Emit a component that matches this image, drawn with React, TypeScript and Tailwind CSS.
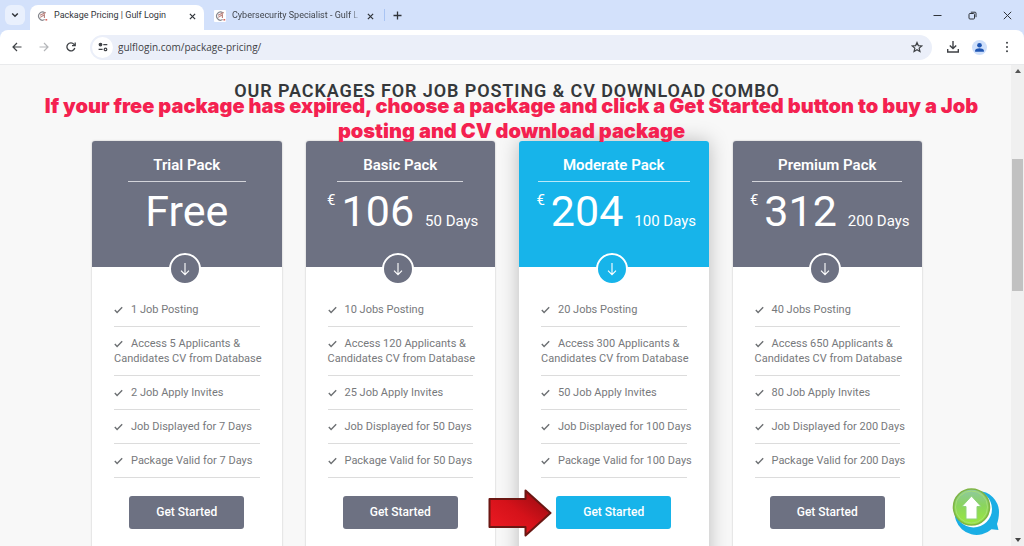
import { ReactNode } from "react";

type Pack = {
  name: string;
  price: string;
  days?: string;
  duration: number;
  jobs: string;
  applicants: number;
  invites: number;
  rule: string;
  featured?: boolean;
};

const packs: Pack[] = [
  { name: "Trial Pack", price: "Free", duration: 7, jobs: "1 Job Posting", applicants: 5, invites: 2, rule: "w-[118px]" },
  { name: "Basic Pack", price: "106", days: "50 Days", duration: 50, jobs: "10 Jobs Posting", applicants: 120, invites: 25, rule: "w-[126px]" },
  { name: "Moderate Pack", price: "204", days: "100 Days", duration: 100, jobs: "20 Jobs Posting", applicants: 300, invites: 50, rule: "w-[152px]", featured: true },
  { name: "Premium Pack", price: "312", days: "200 Days", duration: 200, jobs: "40 Jobs Posting", applicants: 650, invites: 80, rule: "w-[150px]" },
];

function Favicon() {
  return (
    <svg viewBox="0 0 12 12" className="size-3 shrink-0" fill="none" aria-hidden="true">
      <rect width="12" height="12" rx="1" fill="#fff" />
      <path d="M8.8 2.8A4 4 0 1 0 8.6 9.6" stroke="#85878d" strokeWidth="1.2" />
      <path d="M4 5.2 9.8 2.6M4.2 7.4 8.4 4.8V8" stroke="#b9807b" strokeWidth="1.1" />
      <path d="M9.4 9.8h1.8" stroke="#d5554d" strokeWidth="1.4" />
    </svg>
  );
}

function Cross() {
  return (
    <svg viewBox="0 0 8 8" className="size-[7px]" aria-hidden="true">
      <path d="m1 1 6 6M7 1 1 7" stroke="#30343a" strokeWidth="1.4" />
    </svg>
  );
}

function ToolButton({ label, children }: { label: string; children: ReactNode }) {
  return (
    <button aria-label={label} className="flex size-[27px] shrink-0 items-center justify-center">
      {children}
    </button>
  );
}

function TabStrip() {
  return (
    <div className="flex h-[30px] shrink-0 items-end bg-[#d3e1fb]">
      <button aria-label="Search tabs" className="mb-[5px] ml-[5px] flex size-5 items-center justify-center rounded-md bg-[#e9f0fd]">
        <svg viewBox="0 0 8 8" className="size-2" fill="none" aria-hidden="true">
          <path d="m1.2 2.5 2.8 2.8 2.8-2.8" stroke="#30343a" strokeWidth="1.5" />
        </svg>
      </button>
      <div className="ml-[5px] flex h-[25px] w-[174px] items-center rounded-t-lg bg-white pr-2 pb-[3px] pl-[6px]">
        <Favicon />
        <span className="ml-[6px] grow whitespace-nowrap font-[Roboto,sans-serif] text-[9px] text-[#33363b]">Package Pricing | Gulf Login</span>
        <button aria-label="Close tab"><Cross /></button>
      </div>
      <div className="flex h-[25px] w-[174px] items-center pr-1 pb-[3px] pl-[10px]">
        <Favicon />
        <span className="ml-[6px] w-[128px] overflow-hidden whitespace-nowrap font-[Roboto,sans-serif] text-[9px] text-[#42464d] [mask-image:linear-gradient(to_right,#000_92%,transparent)]">
          Cybersecurity Specialist - Gulf L
        </span>
        <button aria-label="Close tab" className="ml-auto"><Cross /></button>
      </div>
      <div className="mb-[9px] ml-[6px] h-3 w-px bg-[#a9c4f3]" />
      <button aria-label="New tab" className="mb-[10px] ml-2">
        <svg viewBox="0 0 9 9" className="size-[9px]" aria-hidden="true">
          <path d="M4.5.5v8M.5 4.5h8" stroke="#30343a" strokeWidth="1.3" />
        </svg>
      </button>
      <div className="mb-[10px] ml-auto flex items-center gap-[26px] pr-3">
        <button aria-label="Minimize">
          <svg viewBox="0 0 9 9" className="size-[9px]" aria-hidden="true"><path d="M.5 4.5h8" stroke="#30343a" /></svg>
        </button>
        <button aria-label="Restore">
          <svg viewBox="0 0 9 9" className="size-[9px]" fill="none" stroke="#30343a" aria-hidden="true">
            <rect x="1" y="2.5" width="5.5" height="5.5" rx="1" />
            <path d="M2.8 1.2H7a1 1 0 0 1 1 1v4" />
          </svg>
        </button>
        <button aria-label="Close window">
          <svg viewBox="0 0 9 9" className="size-[9px]" aria-hidden="true"><path d="m.8.8 7.4 7.4M8.2.8.8 8.2" stroke="#30343a" /></svg>
        </button>
      </div>
    </div>
  );
}

function Toolbar() {
  return (
    <div className="bg-[#d3e1fb]">
      <div className="flex h-[35px] items-center rounded-t-lg border-b border-[#e9eaec] bg-white pr-1 pl-[3px]">
        <ToolButton label="Back">
          <svg viewBox="0 0 10 10" className="size-[10px]" fill="none" stroke="#3f4246" strokeWidth="1.2" aria-hidden="true">
            <path d="M9.5 5H1M5 1 1 5l4 4" />
          </svg>
        </ToolButton>
        <ToolButton label="Forward">
          <svg viewBox="0 0 10 10" className="size-[10px]" fill="none" stroke="#b4b6b9" strokeWidth="1.2" aria-hidden="true">
            <path d="M.5 5H9M5 1l4 4-4 4" />
          </svg>
        </ToolButton>
        <ToolButton label="Reload">
          <svg viewBox="0 0 10 10" className="size-[10px]" fill="none" stroke="#3f4246" strokeWidth="1.3" aria-hidden="true">
            <path d="M8.8 6A4 4 0 1 1 8 2.3L9 3.5" />
            <path d="M9.2.5v3.2H6" />
          </svg>
        </ToolButton>
        <div className="ml-[6px] flex h-[25px] grow items-center rounded-full bg-[#ebeff9] px-[2px]">
          <button aria-label="Site information" className="flex size-[21px] shrink-0 items-center justify-center rounded-full bg-white">
            <svg viewBox="0 0 10 10" className="size-[10px]" fill="none" stroke="#3f4246" strokeWidth="1.2" aria-hidden="true">
              <circle cx="2.5" cy="2.6" r="1.3" fill="#3f4246" />
              <path d="M5.3 2.6h4M.6 7.4h4" />
              <circle cx="7.5" cy="7.4" r="1.3" />
            </svg>
          </button>
          <input aria-label="Address" defaultValue="gulflogin.com/package-pricing/" className="ml-[5px] min-w-0 grow bg-transparent text-[10px] text-[#3f4246] outline-none" />
          <ToolButton label="Bookmark">
            <svg viewBox="0 0 24 24" className="size-3" fill="none" stroke="#3f4246" strokeWidth="2.4" aria-hidden="true">
              <path d="m12 3 2.7 6.2 6.8.6-5.2 4.4 1.6 6.6-5.9-3.5-5.9 3.5 1.6-6.6-5.2-4.4 6.8-.6z" />
            </svg>
          </ToolButton>
        </div>
        <div className="ml-[7px] flex">
          <ToolButton label="Downloads">
            <svg viewBox="0 0 12 12" className="size-3" fill="none" stroke="#3f4246" strokeWidth="1.4" aria-hidden="true">
              <path d="M6 0v7.2M2.8 4.4 6 7.5l3.2-3.1M.7 8v3h10.6V8" />
            </svg>
          </ToolButton>
          <ToolButton label="Profile">
            <svg viewBox="0 0 16 16" className="size-[15px]" aria-hidden="true">
              <circle cx="8" cy="8" r="8" fill="#cfe0fb" />
              <circle cx="8" cy="5.6" r="2.5" fill="#1f56b3" />
              <path d="M3.3 12.4V11c0-1.5 3-2.3 4.7-2.3s4.7.8 4.7 2.3v1.4z" fill="#1f56b3" />
            </svg>
          </ToolButton>
          <ToolButton label="Menu">
            <svg viewBox="0 0 12 12" className="size-3" fill="#3f4246" aria-hidden="true">
              <circle cx="6" cy="1.8" r="1" /><circle cx="6" cy="6" r="1" /><circle cx="6" cy="10.2" r="1" />
            </svg>
          </ToolButton>
        </div>
      </div>
    </div>
  );
}

function Feature({ children }: { children: ReactNode }) {
  return (
    <li className="border-b border-[#dcdcdc] py-[9px] whitespace-nowrap">
      <svg viewBox="0 0 9 8" className="mr-2 inline-block h-2 w-[9px]" fill="none" aria-hidden="true">
        <path d="m.8 4 2.3 2.4L8.2 1.3" stroke="#6d7073" strokeWidth="1.4" />
      </svg>
      {children}
    </li>
  );
}

function PackCard({ pack }: { pack: Pack }) {
  const tone = pack.featured ? "bg-[#17b4ea]" : "bg-[#6d7182]";
  const edge = pack.featured
    ? "shadow-[0_0_20px_rgba(0,0,0,0.25)]"
    : "shadow-[0_0_2px_rgba(0,0,0,0.25)]";
  return (
    <article className={`flex min-w-0 flex-col items-center rounded-[3px] bg-white pb-10 ${edge}`}>
      <div className={`flex h-[126px] w-full flex-col items-center rounded-t-[3px] pt-[14px] text-white ${tone}`}>
        <h3 className="text-[15px] leading-5 font-semibold">{pack.name}</h3>
        <div className={`mt-[6px] h-px bg-white/70 ${pack.rule}`} />
        {pack.days ? (
          <p className="mt-[5px] flex items-baseline pl-[5px] leading-[48px] whitespace-nowrap">
            <span className="self-start text-[15px] leading-[26px]">€</span>
            <span className="ml-[6px] text-[43px]">{pack.price}</span>
            <span className="ml-[11px] text-[15px]">{pack.days}</span>
          </p>
        ) : (
          <p className="mt-[5px] text-[43px] leading-[48px]">{pack.price}</p>
        )}
      </div>
      <div className={`-mt-[14px] mr-1 flex size-8 items-center justify-center rounded-full border-2 border-white ${tone}`}>
        <svg viewBox="0 0 12 14" className="h-[14px] w-3" fill="none" stroke="#fff" strokeWidth="1.1" aria-hidden="true">
          <path d="M6 1v11.5M2 8.6l4 4 4-4" />
        </svg>
      </div>
      <ul className="mt-2 w-full px-[22px] text-[11px] leading-[15px] text-[#77797c]">
        <Feature>{pack.jobs}</Feature>
        <Feature>Access {pack.applicants} Applicants &amp;<br />Candidates CV from Database</Feature>
        <Feature>{pack.invites} Job Apply Invites</Feature>
        <Feature>Job Displayed for {pack.duration} Days</Feature>
        <Feature>Package Valid for {pack.duration} Days</Feature>
      </ul>
      <div className="relative mt-[18px]">
        <button className={`h-[33px] w-[115px] rounded-[3px] pb-[2px] text-[12px] font-medium text-white ${tone}`}>Get Started</button>
        {pack.featured && (
          <svg viewBox="0 0 64 50" className="absolute top-1/2 right-full mr-1 h-[50px] w-16 -translate-y-1/2" aria-hidden="true">
            <defs>
              <linearGradient id="pointer" x1="0" y1="1" x2="1" y2="0">
                <stop offset="0" stopColor="#f01c24" />
                <stop offset="0.5" stopColor="#d5121a" />
                <stop offset="1" stopColor="#8c0a10" />
              </linearGradient>
            </defs>
            <path d="M1.5 11h36V2.5L62.5 25 37.5 47.5V39H1.5Z" fill="url(#pointer)" stroke="#6b1713" strokeWidth="2" strokeLinejoin="round" />
          </svg>
        )}
      </div>
    </article>
  );
}

function ScrollBar() {
  return (
    <div className="flex w-[13px] shrink-0 flex-col items-center bg-[#f0f0f0] py-1" aria-hidden="true">
      <svg viewBox="0 0 6 4" className="h-1 w-[6px]"><path d="m0 4 3-4 3 4z" fill="#555" /></svg>
      <div className="mt-[86px] h-[132px] w-[11px] bg-[#c1c1c1]" />
      <svg viewBox="0 0 6 4" className="mt-auto h-1 w-[6px]"><path d="m0 0 3 4 3-4z" fill="#444" /></svg>
    </div>
  );
}

function ScrollTop() {
  return (
    <button aria-label="Back to top" className="absolute right-[11px] bottom-[10px]">
      <svg viewBox="0 0 48 48" className="size-12" aria-hidden="true">
        <defs>
          <linearGradient id="leaf" x1="0" y1="0" x2="0" y2="1">
            <stop offset="0" stopColor="#8fc8a4" />
            <stop offset="0.45" stopColor="#8ad45e" />
            <stop offset="1" stopColor="#9bea3b" />
          </linearGradient>
        </defs>
        <path d="M26 3a21 21 0 0 1 21 21c0 5-1 9-2 12l1.5 6-7-.8A22 22 0 1 1 26 3Z" fill="#1aaee5" />
        <circle cx="21.5" cy="21" r="18.5" fill="#fff" />
        <circle cx="19.5" cy="19" r="18" fill="url(#leaf)" stroke="#7fb545" strokeWidth="1.6" />
        <circle cx="19.5" cy="19" r="16" fill="none" stroke="#a6dd74" strokeWidth="1" />
        <path d="M19.5 8 29 18.5h-4V31H14V18.5h-4Z" fill="#fff" stroke="#8fd37b" strokeWidth="1" />
      </svg>
    </button>
  );
}

export default function App() {
  return (
    <div className="flex h-screen flex-col overflow-hidden font-['Open_Sans',sans-serif]">
      <TabStrip />
      <Toolbar />
      <div className="flex min-h-0 grow">
        <main className="relative min-w-0 grow overflow-hidden bg-[#f8f8f8] pt-[14px] pl-[3px] font-[Roboto,sans-serif]">
          <h2 className="text-center text-[18px] leading-6 font-semibold tracking-wider whitespace-nowrap text-[#35383b]">
            OUR PACKAGES FOR JOB POSTING &amp; CV DOWNLOAD COMBO
          </h2>
          <section className="mx-auto mt-[38px] grid w-full max-w-[830px] grid-cols-4 gap-6">
            {packs.map((pack) => (
              <PackCard key={pack.name} pack={pack} />
            ))}
          </section>
          <p className="absolute inset-x-0 top-[29px] pl-3 text-center font-[Inter,sans-serif] text-[20px] leading-[25px] font-black whitespace-nowrap text-[#f42150]">
            If your free package has expired, choose a package and click a Get Started button to buy a Job<br />
            posting and CV download package
          </p>
          <ScrollTop />
        </main>
        <ScrollBar />
      </div>
    </div>
  );
}
